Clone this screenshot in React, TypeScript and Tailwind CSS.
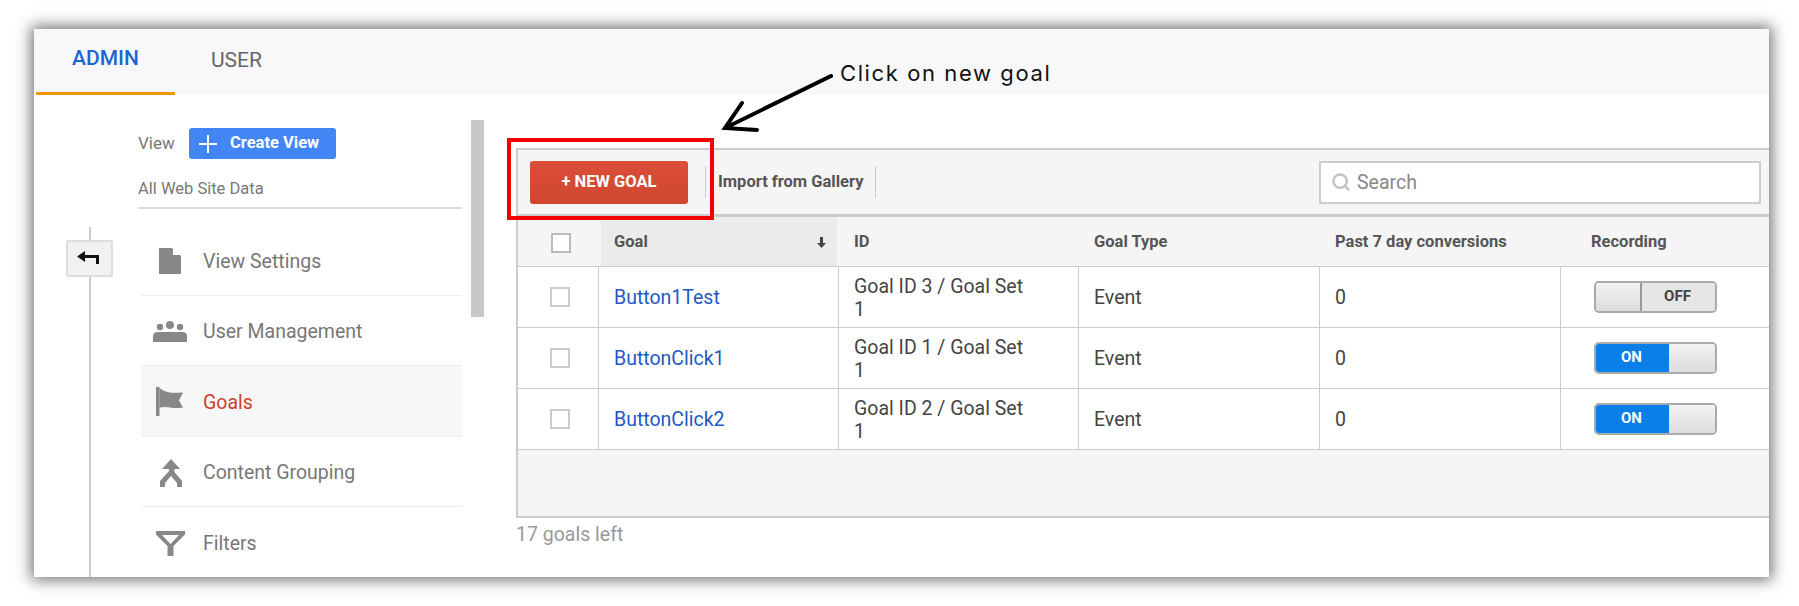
import { Search } from 'lucide-react';

const roboto = "font-['Roboto','Liberation_Sans',sans-serif]";

function DocIcon() {
  return (
    <svg width="24" height="28" viewBox="0 0 24 28" className="fill-[#888]">
      <path d="M1 1h13l9 8v18H1z" />
      <path d="M15 1v7h8z" className="fill-white" />
    </svg>
  );
}

function UsersIcon() {
  return (
    <svg width="34" height="22" viewBox="0 0 34 22" className="fill-[#888]">
      <circle cx="17" cy="4" r="4" />
      <circle cx="7" cy="6" r="3.2" />
      <circle cx="27" cy="6" r="3.2" />
      <path d="M0 21v-6q0-4 5-4h24q5 0 5 4v6z" />
    </svg>
  );
}

function FlagIcon() {
  return (
    <svg width="28" height="30" viewBox="0 0 28 30" className="fill-[#888]">
      <path d="M0 0h3.500v29H0z" />
      <path d="M3.500 1q5 4 10 4.500t13.500 0l-4 8 4 7q-8 1-13 0t-10.500 0z" />
    </svg>
  );
}

function GroupingIcon() {
  return (
    <svg width="24" height="28" viewBox="0 0 24 28" className="fill-[#888]">
      <path d="M13 0l9 10h-5.500v3l7.500 9v6h-5v-4l-6-7-6 7v4H2v-6l9-10v-2H4z" />
    </svg>
  );
}

function FilterIcon() {
  return (
    <svg width="29" height="25" viewBox="0 0 29 25" className="fill-[#888]">
      <path d="M0 0h29v3.500L17.500 15v10h-6V15L0 3.500zM6 4l8.500 9L23 4z" fillRule="evenodd" />
    </svg>
  );
}

const menu = [
  { label: 'View Settings', icon: <DocIcon /> },
  { label: 'User Management', icon: <UsersIcon /> },
  { label: 'Goals', icon: <FlagIcon />, active: true },
  { label: 'Content Grouping', icon: <GroupingIcon /> },
  { label: 'Filters', icon: <FilterIcon /> },
];

function Sidebar() {
  return (
    <aside className="w-[482px] flex flex-shrink-0">
      <div className="ml-[32px] w-[47px] pt-[132px] flex flex-col items-center">
        <div className="w-[2px] h-[13px] bg-[#ccc]" />
        <button className="w-[47px] h-[37px] flex items-center justify-center bg-[#f1f1f1] border-2 border-[#ddd] rounded-[2px]">
          <svg width="22" height="14" viewBox="0 0 22 14" className="fill-[#111] -ml-[3px] -mt-[2px]">
            <path d="M0 5.500L8 0v4h14v9h-3V7H8v4z" />
          </svg>
        </button>
        <div className="w-[2px] flex-1 bg-[#ccc]" />
      </div>

      <div className="ml-[25px] w-[324px] pt-[33px]">
        <div className="flex items-center h-[31px]">
          <span className="text-[17px] text-[#777] w-[51px]">View</span>
          <button className="w-[147px] h-[31px] flex items-center bg-[#4285f4] rounded-[3px] text-white font-bold text-[16.5px] pl-[9px]">
            <svg width="20" height="20" viewBox="0 0 20 20" className="stroke-white stroke-2 mr-[12px]">
              <path d="M10 1v18M1 10h18" />
            </svg>
            Create View
          </button>
        </div>
        <div className="mt-[19px] pb-[7px] border-b-2 border-[#ddd] text-[16.5px] leading-[22px] text-[#777]">All Web Site Data</div>
        <ul className="mt-[16px] ml-[3px]">
          {menu.map((item, i) => (
            <li
              key={item.label}
              className={`h-[70.5px] flex items-center pt-[3px] ${i < 4 ? 'border-b border-[#eee]' : ''} ${item.active ? 'bg-[#f7f7f7]' : ''}`}
            >
              <span className="w-[56px] pl-[2px] flex justify-center mr-[6px]">{item.icon}</span>
              <span className={`text-[19.500px] ${item.active ? 'text-[#d0402f]' : 'text-[#777]'}`}>{item.label}</span>
            </li>
          ))}
        </ul>
      </div>

      <div className="ml-[9px] mt-[25px] w-[13px] h-[197px] bg-[#c8c8c8]" />
    </aside>
  );
}

function Toggle({ on }: { on: boolean }) {
  return (
    <div className="w-[123px] h-[32px] flex rounded-[5px] overflow-hidden border-2 border-[#aaa] text-[15px] font-bold">
      {on ? (
        <>
          <div className="w-[75px] -ml-[2px] -my-[2px] bg-[#0a7fe8] text-white flex items-center justify-center pb-[2px] rounded-l-[5px]">ON</div>
          <div className="flex-1 bg-gradient-to-b from-[#f2f2f2] to-[#dcdcdc]" />
        </>
      ) : (
        <>
          <div className="w-[46px] bg-gradient-to-b from-[#f2f2f2] to-[#dcdcdc] border-r-2 border-[#999]" />
          <div className="flex-1 bg-[#e6e6e6] text-[#444] flex items-center justify-center pb-[2px] pr-[2px]">OFF</div>
        </>
      )}
    </div>
  );
}

const rows = [
  { name: 'Button1Test', id: 'Goal ID 3 / Goal Set 1', on: false },
  { name: 'ButtonClick1', id: 'Goal ID 1 / Goal Set 1', on: true },
  { name: 'ButtonClick2', id: 'Goal ID 2 / Goal Set 1', on: true },
];

const gridCols = 'grid grid-cols-[81px_240px_240px_241px_241px_1fr]';

function GoalsTable() {
  return (
    <div className="flex-1 pt-[53px] min-w-0">
      <div className="border-2 border-r-0 border-[#ccc] bg-[#f5f5f5]">
        <div className="h-[67px] flex items-center border-b-[3px] border-[#ccc] pl-[12px] pr-[8px]">
          <button className="w-[158px] h-[43px] bg-gradient-to-b from-[#db4f3a] to-[#d1462f] rounded-[3px] text-white font-bold text-[16.500px] pt-[1px]">
            + NEW GOAL
          </button>
          <div className="ml-[17px] w-px h-[32px] bg-[#ccc]" />
          <span className="ml-[12px] text-[16.500px] font-bold text-[#555] pt-[1px]">Import from Gallery</span>
          <div className="ml-[12px] w-px h-[32px] bg-[#ccc]" />
          <div className="ml-auto w-[442px] h-[43px] flex items-center bg-white border-2 border-[#ccc] pl-[10px]">
            <Search size={20} strokeWidth={3} className="text-[#c4c4c4]" />
            <span className="ml-[6px] pt-[1px] text-[19.500px] text-[#888]">Search</span>
          </div>
        </div>

        <div className={`${gridCols} h-[50px] border-b border-[#ccc] text-[16.500px] font-bold text-[#555]`}>
          <div className="flex items-center pl-[33px] pt-[2px]">
            <div className="w-[20px] h-[20px] bg-white border-2 border-[#bbb]" />
          </div>
          <div className="flex items-center justify-between bg-[#ebebeb] pl-[13px] pr-[11px] pt-[2px] border-x-2 border-[#f5f5f5] ">
            Goal
            <svg width="9" height="11" viewBox="0 0 9 11" className="fill-[#444]">
              <path d="M3 0h3v6h3l-4.500 5L0 6h3z" />
            </svg>
          </div>
          <div className="flex items-center pl-[15px] pt-[2px]">ID</div>
          <div className="flex items-center pl-[15px] pt-[2px]">Goal Type</div>
          <div className="flex items-center pl-[15px] pt-[2px]">Past 7 day conversions</div>
          <div className="flex items-center pl-[30px] pt-[2px]">Recording</div>
        </div>

        {rows.map((row) => (
          <div key={row.name} className={`${gridCols} h-[61px] bg-white border-b border-[#ccc] text-[19.500px] text-[#444]`}>
            <div className="flex items-center pl-[32px] border-r border-[#ccc]">
              <div className="w-[20px] h-[20px] bg-white border-2 border-[#ccc]" />
            </div>
            <div className="flex items-center pl-[15px] pt-[1px] border-r border-[#ccc] text-[#2159c4]">{row.name}</div>
            <div className="flex items-center pl-[15px] pr-[40px] pt-[1px] leading-[23px] border-r border-[#ccc]">{row.id}</div>
            <div className="flex items-center pl-[15px] pt-[1px] border-r border-[#ccc]">Event</div>
            <div className="flex items-center pl-[15px] pt-[1px] border-r border-[#ccc]">0</div>
            <div className="flex items-center pl-[33px]">
              <Toggle on={row.on} />
            </div>
          </div>
        ))}

        <div className="h-[66px]" />
      </div>
      <p className="mt-[5px] text-[19.500px] leading-[24px] text-[#999]">17 goals left</p>
    </div>
  );
}

export default function App() {
  return (
    <div className={`relative w-[1799px] h-[606px] overflow-hidden bg-white pt-[29px] pl-[34px] ${roboto}`}>
      <div className="w-[1735px] h-[548px] flex flex-col overflow-hidden bg-white shadow-[0_0_14px_3px_rgba(0,0,0,0.55)]">
        <nav className="h-[66px] flex-shrink-0 flex bg-[#f8f8fa] text-[21px] pl-[2px]">
          <a className="w-[139px] flex items-center justify-center pb-[3px] border-b-[3px] border-[#f0960e] text-[#1c66d2] font-medium">ADMIN</a>
          <a className="ml-[36px] flex items-center pb-[3px] text-[#666]">USER</a>
        </nav>
        <div className="flex flex-1 min-h-0">
          <Sidebar />
          <GoalsTable />
        </div>
      </div>

      {/* callout drawn over the screenshot */}
      <div className="absolute left-[507px] top-[138px] w-[207px] h-[82px] border-4 border-[#f50000]" />
      <svg className="absolute left-[715px] top-[68px]" width="125" height="70" viewBox="0 0 125 70" fill="none">
        <path d="M116 8L10 60M27 35L10 60L42 62" stroke="#000" strokeWidth="4" strokeLinecap="round" />
      </svg>
      <span className="absolute left-[840px] top-[58px] text-[22px] leading-[30px] tracking-[1.6px] text-[#111] font-['Inter',sans-serif]">
        Click on new goal
      </span>
    </div>
  );
}
